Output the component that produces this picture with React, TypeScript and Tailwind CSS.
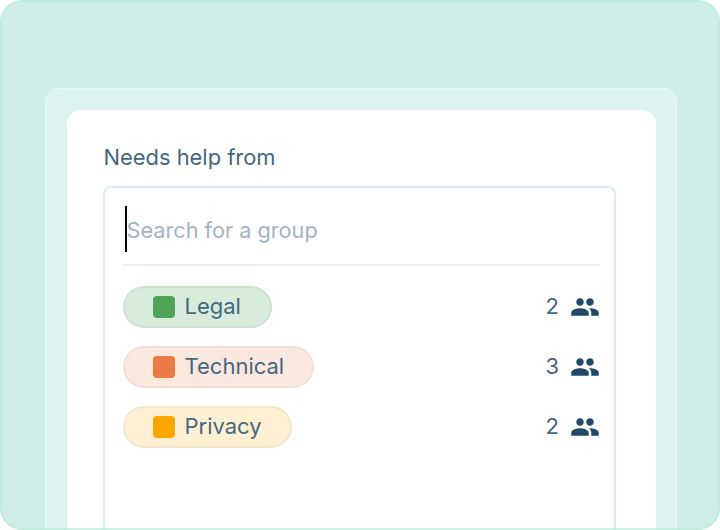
import React from 'react';

const groups = [
    {
        name: 'Legal',
        count: 2,
        pill: 'w-[149.5px] bg-[#d7ecdb] border-[#cde2d2]',
        swatch: 'bg-[#4ea356]',
    },
    {
        name: 'Technical',
        count: 3,
        pill: 'w-[191px] bg-[#fbe8df] border-[#f0e0d8]',
        swatch: 'bg-[#ec7a45]',
    },
    {
        name: 'Privacy',
        count: 2,
        pill: 'w-[169.5px] bg-[#fff0d4] border-[#f3e6cb]',
        swatch: 'bg-[#ffa600]',
    },
];

const PeopleIcon = () => (
    <svg width="30" height="30" viewBox="0 0 24 24" fill="#204a68" className="ml-[11px]">
        <path d="M16 11c1.66 0 2.99-1.34 2.99-3S17.66 5 16 5s-3 1.34-3 3 1.34 3 3 3zm-8 0c1.66 0 2.99-1.34 2.99-3S9.66 5 8 5 5 6.34 5 8s1.34 3 3 3zm0 2c-2.33 0-7 1.17-7 3.5V19h14v-2.5c0-2.33-4.67-3.5-7-3.5zm8 0c-.29 0-.62.02-.97.05 1.16.84 1.97 1.97 1.97 3.45V19h6v-2.5c0-2.33-4.67-3.5-7-3.5z" />
    </svg>
);

const App: React.FC = () => {
    return (
        <div className="relative h-[530px] w-[720px] overflow-hidden rounded-[22px] bg-[#cfeee7] pt-[88px] pr-[43px] pl-[45px] font-['Inter',sans-serif]">
            {/* Panel behind the card */}
            <div className="h-[460px] rounded-t-[14px] border-[1.5px] border-[#eaf8f5] bg-[#dcf3ef] pt-[20.5px] pr-[20px] pl-[20.5px]">
                {/* Card */}
                <div className="h-[440px] rounded-t-[14px] bg-white pt-[33px] pr-[40px] pl-[36px]">
                    <p className="ml-[1px] text-[21.9px] leading-[28px] text-[#45677f]">Needs help from</p>

                    <div className="mt-[15px] h-[360px] rounded-t-[8px] border-2 border-[#dfe9f1] pt-[18px] pr-[14px] pl-[18px]">
                        {/* Search input */}
                        <div className="-ml-[1px] flex h-[60px] border-b-2 border-[#eff2f4] pl-[3px]">
                            <div className="h-[46px] w-[2px] bg-black"></div>
                            <span className="mt-[10px] text-[21.7px] leading-[28px] text-[#a3b4c0]">
                                Search for a group
                            </span>
                        </div>

                        {/* Groups */}
                        <div className="mt-[20px] flex flex-col gap-[18px]">
                            {groups.map(group => (
                                <div key={group.name} className="flex h-[42px] items-center justify-between">
                                    <div
                                        className={`flex h-[42px] items-center rounded-full border-2 pl-[28px] ${group.pill}`}
                                    >
                                        <div className={`h-[22px] w-[22px] rounded-[4px] ${group.swatch}`}></div>
                                        <span className="ml-[10px] text-[22px] text-[#45677f]">{group.name}</span>
                                    </div>
                                    <div className="flex items-center">
                                        <span className="text-[22px] text-[#45677f]">{group.count}</span>
                                        <PeopleIcon />
                                    </div>
                                </div>
                            ))}
                        </div>
                    </div>
                </div>
            </div>

            {/* Outer border sits over the panels */}
            <div className="pointer-events-none absolute inset-0 rounded-[22px] border-2 border-[#b9e9dc]/70"></div>
        </div>
    );
};

export default App;
